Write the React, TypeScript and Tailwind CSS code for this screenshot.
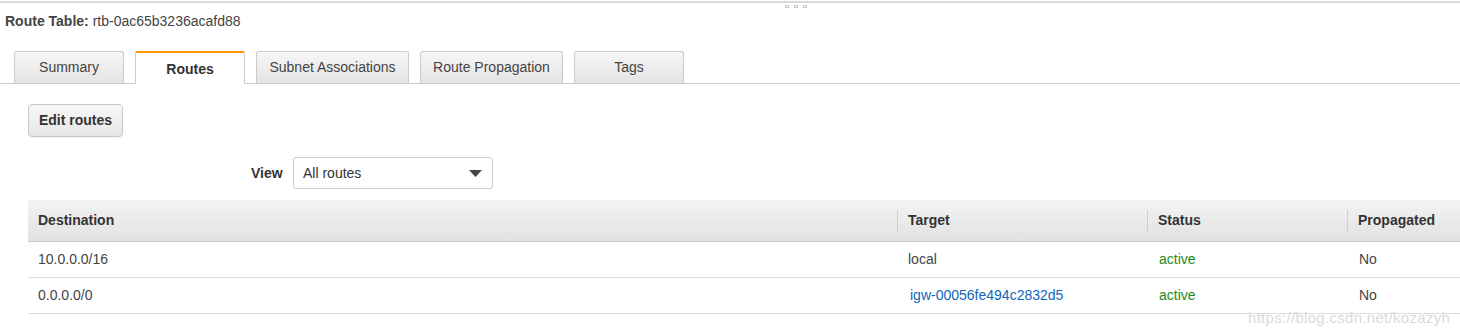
import React from 'react';

const tabs = ['Summary', 'Routes', 'Subnet Associations', 'Route Propagation', 'Tags'];
const tabWidths: Record<string, string> = {
  Summary: 'w-[110px]',
  Routes: 'w-[110px]',
  'Subnet Associations': 'w-[153px]',
  'Route Propagation': 'w-[143px]',
  Tags: 'w-[110px]',
};

const routes = [
  { dest: '10.0.0.0/16', target: 'local', link: false, status: 'active', prop: 'No' },
  { dest: '0.0.0.0/0', target: 'igw-00056fe494c2832d5', link: true, status: 'active', prop: 'No' },
];

const cols = 'grid grid-cols-[869px_250px_200px_1fr]';

const App: React.FC = () => {
  return (
    <div className="relative w-full h-[335px] bg-white text-[14px] text-[#444] font-['Liberation_Sans',Arial,sans-serif] overflow-hidden">
      <div className="h-[2px] bg-[#d9d9d9] mt-px" />
      <div className="absolute top-[5px] left-[785px] flex gap-[5px]">
        <span className="w-[4px] h-[3px] border border-[#c8c8c8]" />
        <span className="w-[4px] h-[3px] border border-[#c8c8c8]" />
        <span className="w-[4px] h-[3px] border border-[#c8c8c8]" />
      </div>

      <div className="pl-[5px] mt-[10px] leading-[16px]">
        <span className="font-bold">Route Table:</span> rtb-0ac65b3236acafd88
      </div>

      <div className="mt-[22px] flex gap-[11px] pl-[14px] border-b border-[#cccccc] h-[33px] items-end">
        {tabs.map((t) =>
          t === 'Routes' ? (
            <div
              key={t}
              className={`${tabWidths[t]} h-[33px] -mb-px bg-white border-x border-t-2 border-x-[#cccccc] border-t-[#ff9900] rounded-t-[2px] flex items-center justify-center font-bold text-[#333] pt-[2px]`}
            >
              {t}
            </div>
          ) : (
            <div
              key={t}
              className={`${tabWidths[t]} h-[32px] bg-gradient-to-b from-[#f6f6f6] to-[#e4e4e4] border border-b-0 border-[#cccccc] rounded-t-[3px] flex items-center justify-center text-[#444]`}
            >
              {t}
            </div>
          )
        )}
      </div>

      <div className="pl-[28px]">
        <button className="mt-[20px] w-[95px] h-[33px] rounded-[4px] border border-[#c9c9c9] bg-gradient-to-b from-[#f7f7f7] to-[#e6e6e6] font-bold text-[#333] text-[14px] shadow-[0_1px_0_rgba(0,0,0,0.05)]">
          Edit routes
        </button>

        <div className="mt-[20px] flex items-center ml-[223px]">
          <span className="font-bold text-[#333] w-[33px]">View</span>
          <div className="ml-[9px] w-[200px] h-[32px] border border-[#cccccc] rounded-[3px] flex items-center justify-between pl-[9px] pr-[10px] bg-white">
            <span className="text-[#333]">All routes</span>
            <svg width="13" height="7" viewBox="0 0 13 7">
              <path d="M0 0h13L6.5 7z" fill="#444" />
            </svg>
          </div>
        </div>

        <div className="mt-[11px]">
          <div className={`${cols} h-[42px] pb-px bg-gradient-to-b from-[#f3f3f3] to-[#e2e2e2] border-b border-[#c9c9c9] font-bold text-[#333]`}>
            <div className="flex items-center pl-[10px]">Destination</div>
            <div className="flex items-center pl-[11px] relative">
              <span className="absolute left-0 top-[10px] h-[22px] w-px bg-[#cfcfcf]" />
              Target
            </div>
            <div className="flex items-center pl-[11px] relative">
              <span className="absolute left-0 top-[10px] h-[22px] w-px bg-[#cfcfcf]" />
              Status
            </div>
            <div className="flex items-center pl-[11px] relative">
              <span className="absolute left-0 top-[10px] h-[22px] w-px bg-[#cfcfcf]" />
              Propagated
            </div>
          </div>
          {routes.map((r) => (
            <div key={r.dest} className={`${cols} h-[36px] border-b border-[#dddddd]`}>
              <div className="flex items-center pl-[10px]">{r.dest}</div>
              <div className="flex items-center pl-[11px]">
                {r.link ? <span className="ml-[2px] text-[#1166bb]">{r.target}</span> : r.target}
              </div>
              <div className="flex items-center pl-[12px] text-[#1d8a1d]">{r.status}</div>
              <div className="flex items-center pl-[12px]">{r.prop}</div>
            </div>
          ))}
        </div>
      </div>

      <div className="absolute left-[1248px] top-[307px] text-[15px] text-[#dadada] tracking-[0.3px]">
        https://blog.csdn.net/kozazyh
      </div>
    </div>
  );
};

export default App;
